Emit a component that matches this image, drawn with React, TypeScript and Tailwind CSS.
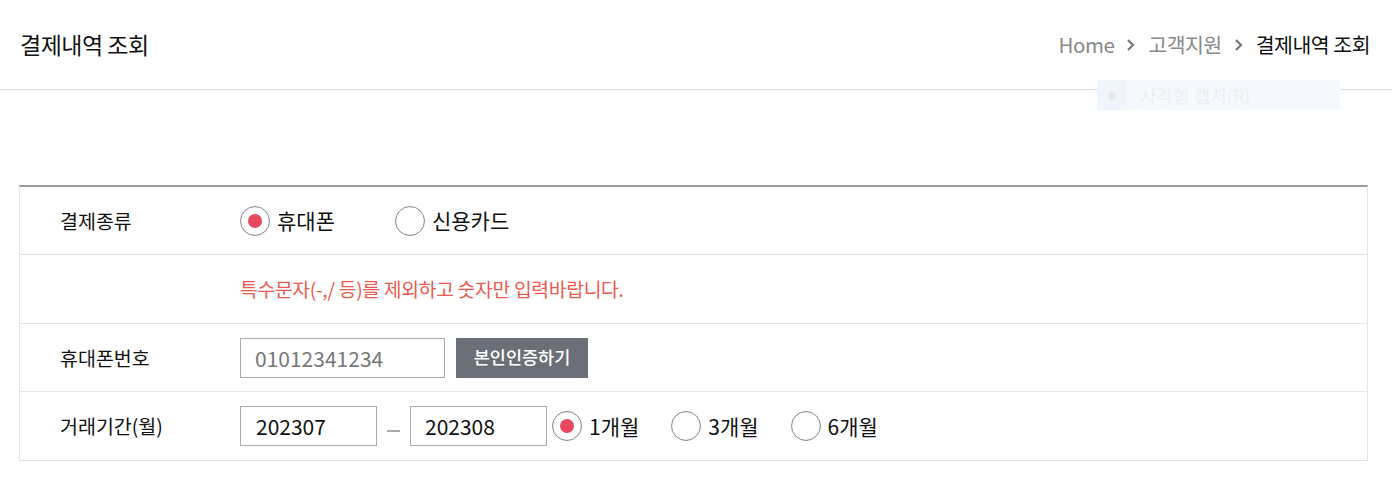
import React, { useState } from "react";

const font = { fontFamily: '"Noto Sans CJK KR", "Noto Sans", sans-serif' };

function Radio({ checked, label, onClick }: { checked: boolean; label: string; onClick: () => void }) {
  return (
    <label onClick={onClick} className="flex items-center cursor-pointer">
      <span className="flex items-center justify-center w-[30px] h-[30px] rounded-full border border-[#8a8a8a] bg-white shadow-[inset_0_0_1px_#bbb]">
        {checked && <span className="w-[14px] h-[14px] rounded-full bg-[#e9475f]" />}
      </span>
      <span className="ml-[7px] text-[21px] text-[#111] leading-none">{label}</span>
    </label>
  );
}

function Chevron() {
  return (
    <svg width="12" height="16" viewBox="0 0 12 16" className="mx-[11px]">
      <polyline points="3,3 8,8 3,13" fill="none" stroke="#777" strokeWidth="2.2" />
    </svg>
  );
}

export default function App() {
  const [payType, setPayType] = useState("phone");
  const [period, setPeriod] = useState(1);

  return (
    <div className="w-[1392px] h-[503px] bg-white relative" style={font}>
      {/* 상단 타이틀 */}
      <div className="h-[90px] border-b border-[#dcdcdc] flex items-center justify-between pl-[20px] pr-[22px]">
        <h1 className="text-[23px] text-[#111] tracking-[-0.5px]">결제내역 조회</h1>
        <div className="flex items-center text-[20.5px] tracking-[-0.5px]">
          <span className="text-[#888]">Home</span>
          <Chevron />
          <span className="text-[#888]">고객지원</span>
          <Chevron />
          <span className="text-[#111]">결제내역 조회</span>
        </div>
      </div>

      {/* 캡처 도구 잔상 */}
      <div className="absolute left-[1097px] top-[80px] w-[243px] h-[30px] bg-[#f5f9fe] flex items-center">
        <span className="w-[30px] h-full bg-[#f0f5fb] flex items-center justify-center text-[#e4e9f0] text-[10px]">◆</span>
        <span className="ml-[13px] text-[18px] text-[#eceff3]">사각형 캡처(R)</span>
      </div>

      {/* 조회 폼 */}
      <div className="ml-[19px] mt-[95px] w-[1349px] border-t-2 border-[#9a9a9a] border-x border-x-[#e4e4e4] border-b border-b-[#e4e4e4]">
        <div className="h-[68px] flex items-center border-b border-[#e4e4e4]">
          <div className="w-[220px] pl-[40px] text-[19.5px] text-[#111]">결제종류</div>
          <div className="flex items-center gap-[60px]">
            <Radio checked={payType === "phone"} label="휴대폰" onClick={() => setPayType("phone")} />
            <Radio checked={payType === "card"} label="신용카드" onClick={() => setPayType("card")} />
          </div>
        </div>
        <div className="h-[69px] flex items-center border-b border-[#e4e4e4]">
          <div className="w-[220px]" />
          <p className="text-[19.3px] text-[#ea5a4f] tracking-[-0.3px]">특수문자(-,/ 등)를 제외하고 숫자만 입력바랍니다.</p>
        </div>
        <div className="h-[68px] flex items-center border-b border-[#e4e4e4]">
          <div className="w-[220px] pl-[40px] text-[19.5px] text-[#111]">휴대폰번호</div>
          <input
            defaultValue="01012341234"
            className="w-[205px] h-[40px] border border-[#aaa] px-[14px] text-[21px] text-[#777] outline-none"
          />
          <button className="ml-[11px] w-[132px] h-[40px] bg-[#6b6f77] text-white text-[17.5px] font-medium">본인인증하기</button>
        </div>
        <div className="h-[68px] flex items-center">
          <div className="w-[220px] pl-[40px] text-[19.5px] text-[#111]">거래기간(월)</div>
          <input
            defaultValue="202307"
            className="w-[137px] h-[40px] border border-[#aaa] px-[15px] text-[21px] text-[#111] outline-none"
          />
          <div className="w-[33px] flex justify-center pt-[10px]">
            <span className="w-[13px] h-[2px] bg-[#aaa]" />
          </div>
          <input
            defaultValue="202308"
            className="w-[137px] h-[40px] border border-[#aaa] px-[14px] text-[21px] text-[#111] outline-none"
          />
          <div className="ml-[5px] flex items-center gap-[32px]">
            {[1, 3, 6].map((m) => (
              <Radio key={m} checked={period === m} label={`${m}개월`} onClick={() => setPeriod(m)} />
            ))}
          </div>
        </div>
      </div>
    </div>
  );
}
